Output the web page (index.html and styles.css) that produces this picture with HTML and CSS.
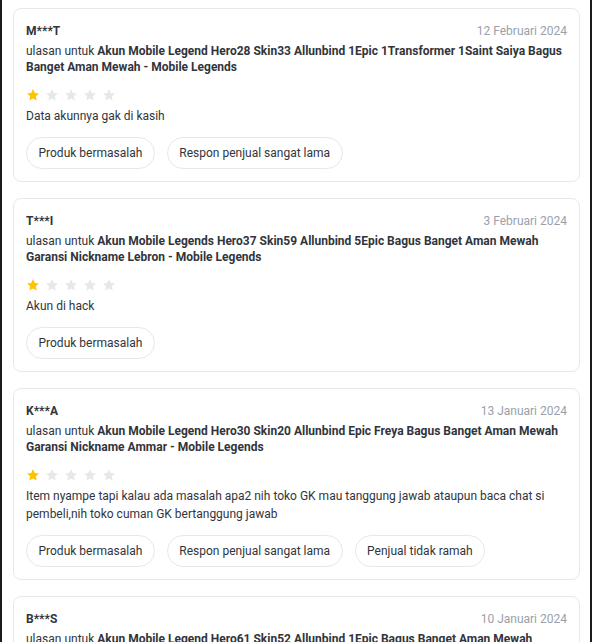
FILE: index.html
```html
<!DOCTYPE html>
<html lang="id">
<head>
<meta charset="utf-8">
<title>Ulasan</title>
<link rel="stylesheet" href="styles.css">
</head>
<body>
<svg width="0" height="0" class="defs" aria-hidden="true">
  <defs>
    <symbol id="star" viewBox="0 0 24 24">
      <path d="M12 1.8l3.1 6.6 7.1.9-5.2 4.9 1.3 7.1L12 17.8l-6.3 3.5 1.3-7.1-5.2-4.9 7.1-.9z"/>
    </symbol>
  </defs>
</svg>
<div class="frame">
  <div class="list">
    <article class="card">
      <div class="head"><span class="user">M***T</span><span class="date">12 Februari 2024</span></div>
      <p class="product">ulasan untuk <b>Akun Mobile Legend Hero28 Skin33 Allunbind 1Epic 1Transformer 1Saint Saiya Bagus Banget Aman Mewah - Mobile Legends</b></p>
      <div class="stars"><svg class="on"><use href="#star"/></svg><svg><use href="#star"/></svg><svg><use href="#star"/></svg><svg><use href="#star"/></svg><svg><use href="#star"/></svg></div>
      <p class="comment">Data akunnya gak di kasih</p>
      <div class="chips"><span class="chip">Produk bermasalah</span><span class="chip">Respon penjual sangat lama</span></div>
    </article>
    <article class="card">
      <div class="head"><span class="user">T***I</span><span class="date">3 Februari 2024</span></div>
      <p class="product">ulasan untuk <b>Akun Mobile Legends Hero37 Skin59 Allunbind 5Epic Bagus Banget Aman Mewah Garansi Nickname Lebron - Mobile Legends</b></p>
      <div class="stars"><svg class="on"><use href="#star"/></svg><svg><use href="#star"/></svg><svg><use href="#star"/></svg><svg><use href="#star"/></svg><svg><use href="#star"/></svg></div>
      <p class="comment">Akun di hack</p>
      <div class="chips"><span class="chip">Produk bermasalah</span></div>
    </article>
    <article class="card">
      <div class="head"><span class="user">K***A</span><span class="date">13 Januari 2024</span></div>
      <p class="product">ulasan untuk <b>Akun Mobile Legend Hero30 Skin20 Allunbind Epic Freya Bagus Banget Aman Mewah Garansi Nickname Ammar - Mobile Legends</b></p>
      <div class="stars"><svg class="on"><use href="#star"/></svg><svg><use href="#star"/></svg><svg><use href="#star"/></svg><svg><use href="#star"/></svg><svg><use href="#star"/></svg></div>
      <p class="comment">Item nyampe tapi kalau ada masalah apa2 nih toko GK mau tanggung jawab ataupun baca chat si pembeli,nih toko cuman GK bertanggung jawab</p>
      <div class="chips"><span class="chip">Produk bermasalah</span><span class="chip">Respon penjual sangat lama</span><span class="chip">Penjual tidak ramah</span></div>
    </article>
    <article class="card">
      <div class="head"><span class="user">B***S</span><span class="date">10 Januari 2024</span></div>
      <p class="product">ulasan untuk <b>Akun Mobile Legend Hero61 Skin52 Allunbind 1Epic Bagus Banget Aman Mewah Garansi Nickname - Mobile Legends</b></p>
      <div class="stars"><svg class="on"><use href="#star"/></svg><svg><use href="#star"/></svg><svg><use href="#star"/></svg><svg><use href="#star"/></svg><svg><use href="#star"/></svg></div>
      <p class="comment">Akun tidak sesuai</p>
      <div class="chips"><span class="chip">Produk bermasalah</span></div>
    </article>
  </div>
</div>
</body>
</html>
```
FILE: styles.css
```css
html, body {
  margin: 0;
  padding: 0;
  background: #ffffff;
}
body {
  font-family: Roboto, "Liberation Sans", Arial, sans-serif;
  color: #31353b;
  font-size: 12px;
}
.defs {
  position: absolute;
  width: 0;
  height: 0;
  overflow: hidden;
}
.frame {
  min-height: 642px;
  border-left: 2px solid #1b1b1b;
  border-right: 2px solid #1b1b1b;
  padding: 8px 10px 0 11px;
  box-sizing: border-box;
}
.list {
  display: flex;
  flex-direction: column;
  gap: 16px;
}
.card {
  border: 1px solid #e6e8eb;
  border-radius: 8px;
  padding: 14px 12px 12px;
  display: flex;
  flex-direction: column;
}
.head {
  display: flex;
  justify-content: space-between;
  align-items: center;
  height: 16px;
  line-height: 16px;
}
.user {
  font-weight: 700;
  color: #31353b;
}
.date {
  color: #9aa1aa;
}
.product {
  margin: 4px 0 0;
  line-height: 16px;
  color: #31353b;
}
.product b {
  font-weight: 700;
}
.stars {
  margin-top: 12px;
  height: 16px;
  display: flex;
  align-items: center;
  gap: 5px;
}
.stars svg {
  width: 14px;
  height: 14px;
  fill: #e6e8ea;
}
.stars svg.on {
  fill: #ffc400;
}
.comment {
  margin: 4px 0 0;
  line-height: 18px;
  color: #31353b;
}
.chips {
  margin-top: 12px;
  display: flex;
  gap: 12px;
}
.chip {
  height: 32px;
  box-sizing: border-box;
  border: 1px solid #e6e8eb;
  border-radius: 16px;
  padding: 0 11.5px;
  display: flex;
  align-items: center;
  color: #31353b;
}
```
